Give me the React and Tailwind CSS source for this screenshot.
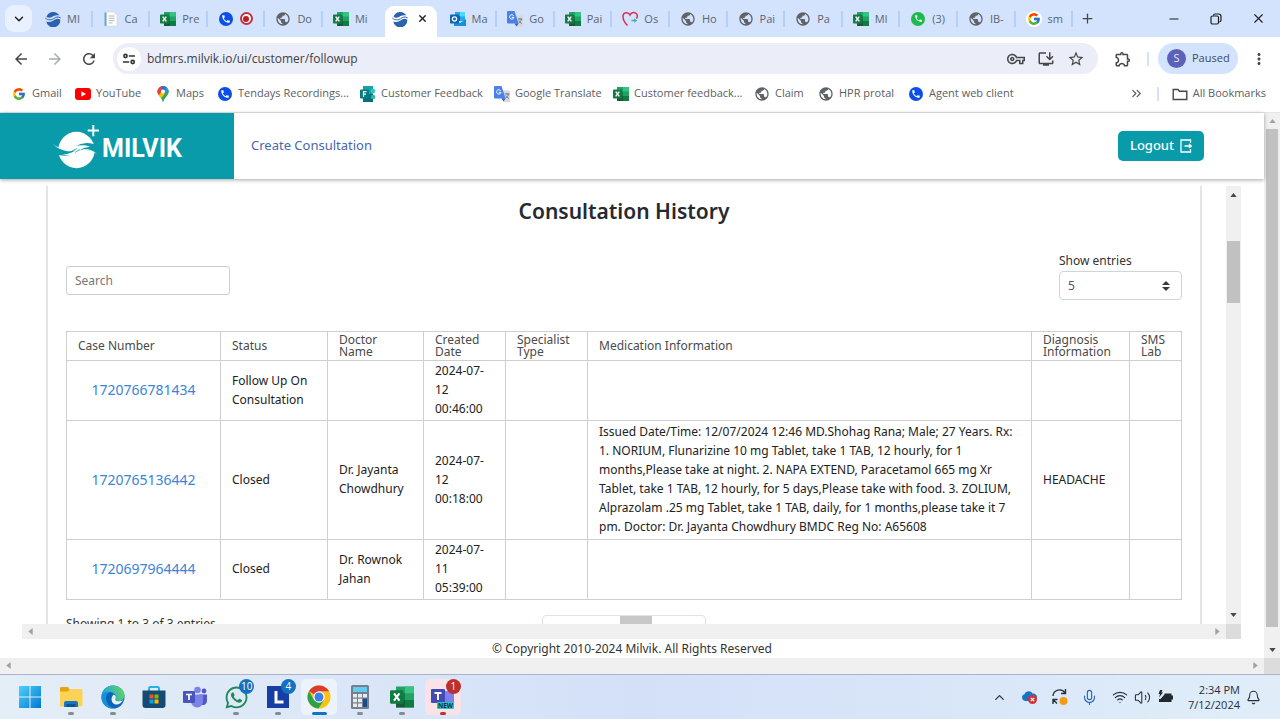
import React from "react";
import { ChevronDown, ChevronUp, Minus, Plus, X, Bell, Mic, Wifi, Volume2, ChevronsRight } from "lucide-react";
import {
  MdArrowBack, MdArrowForward, MdRefresh, MdOutlineVpnKey, MdOutlineInstallDesktop, MdStarBorder,
  MdOutlineExtension, MdMoreVert, MdPublic, MdPhone,
} from "react-icons/md";
import { FcGoogle } from "react-icons/fc";
import { FaWhatsapp } from "react-icons/fa";

const uiFont = "font-['Open_Sans','Noto_Sans',sans-serif]";
const pageFont = "font-['Noto_Sans','Open_Sans',sans-serif]";

/* ---------- favicons ---------- */

const Milvik = () => (
  <svg viewBox="0 0 16 16" className="size-4">
    <path fill="#2b62ad" d="M1.500 5.800A7 7 0 0 1 14.300 4.500C11 3.600 9 4.600 7 6 5 7.200 3 7 1.500 5.800Z" />
    <path fill="#2b62ad" d="M1.300 10.400C4 11.300 6.500 11 8.500 9.500 10.500 8 12.500 7 15.200 8.400A7 7 0 0 1 1.300 10.400Z" />
    <path fill="none" stroke="#2b62ad" strokeWidth="1" d="M.3 7C3.500 9.800 6.500 9 8.500 7.700 11 5.700 13 5.600 15.600 6.800" />
  </svg>
);
const Globe = () => <MdPublic className="size-4 text-[#5f6368]" />;
const Doc = () => (
  <svg viewBox="0 0 16 16" className="size-4">
    <path fill="#fff" stroke="#d0d4d8" strokeWidth=".6" d="M3 1h8.500L14 3.500V15H3Z" />
    <path fill="#6ba7c8" d="M1.500 1.500h2V15h-2Z" />
    <path stroke="#9aa7a4" strokeWidth=".8" d="M5.500 5h6M5.500 7.300h6M5.500 9.600h6M5.500 11.900h4" />
    <path fill="#d6dfdd" d="M11.500 1v2.500H14Z" />
  </svg>
);
const Excel = ({ className = "size-4" }) => (
  <svg viewBox="0 0 16 16" className={className}>
    <path fill="#21a366" d="M4 1h12v14H4Z" />
    <path fill="#33c481" d="M10 1h6v4.500h-6Z" />
    <path fill="#107c41" d="M4 5.500h6V10H4ZM10 10h6v5h-6Z" />
    <path fill="#185c37" d="M4 10h6v5H4Z" />
    <rect y="3.500" width="9" height="9" rx=".8" fill="#107c41" />
    <path stroke="#fff" strokeWidth="1.400" d="m2.700 5.600 3.600 4.800M6.300 5.600l-3.600 4.800" />
  </svg>
);
const Phone = () => (
  <span className="flex size-[14px] items-center justify-center rounded-full bg-[#0b4fe6]">
    <MdPhone className="size-[10px] text-white" />
  </span>
);
const Outlook = () => (
  <svg viewBox="0 0 16 16" className="size-4">
    <path fill="#28a8ea" d="M5 1h10v9H5Z" />
    <path fill="#50d9ff" d="M10 1h5v4.500h-5Z" />
    <path fill="#0364b8" d="M5 5h5v5H5Z" />
    <path fill="#1490df" d="M4 15V9l6 3 6-4v7Z" />
    <rect y="3.500" width="9" height="9" rx=".8" fill="#0f66b8" />
    <circle cx="4.500" cy="8" r="2.100" fill="none" stroke="#fff" strokeWidth="1.300" />
  </svg>
);
const Translate = () => (
  <svg viewBox="0 0 16 16" className="size-4">
    <path fill="#d5d8dc" d="M7 4.500h8a1 1 0 0 1 1 1V15a1 1 0 0 1-1 1h-5Z" />
    <path fill="#4a80e8" d="M1 0h6.500l4 12.500H1a1 1 0 0 1-1-1V1a1 1 0 0 1 1-1Z" />
    <path fill="#2a56c6" d="M7.500 12.500h4L9.500 15.500Z" />
    <path fill="none" stroke="#fff" strokeWidth="1" d="M6.600 4.600A2.200 2.200 0 1 0 7 6.300H4.800" />
    <path stroke="#697078" strokeWidth=".9" fill="none" d="M10.800 8h4.500M13 7v1M14.500 8c-.3 2-1.800 3.500-3 4.200M11.800 9.500c.5 1.200 1.800 2.400 3 3" />
  </svg>
);
const Heart = () => (
  <svg viewBox="0 0 16 16" className="size-4" fill="none">
    <path stroke="#d9304f" strokeWidth="1.500" d="M5.500 14.500C3 12 .8 8.500 1 5 1.300 1.500 6 .2 8 4c1.500-3.500 6-3.300 7-.5.5 1.700.2 3-.5 4" />
    <path fill="#35b5b0" d="M9.500 8.800h2.700V7.300l3 2.200-3 2.200v-1.500H9.500Z" />
  </svg>
);
const Whats = () => (
  <span className="flex size-[14px] items-center justify-center rounded-full bg-[#1cba4a]">
    <MdPhone className="size-[9px] text-white" />
  </span>
);
const Google = () => (
  <span className="flex size-4 items-center justify-center rounded-full bg-white"><FcGoogle className="size-[14px]" /></span>
);
const YouTube = () => (
  <svg viewBox="0 0 16 12" className="h-3 w-4"><rect width="16" height="12" rx="3" fill="#f00" /><path fill="#fff" d="M6.300 3.300v5.400L11 6Z" /></svg>
);
const MapsPin = () => (
  <svg viewBox="0 0 12 16" className="h-4 w-3">
    <clipPath id="pin"><path d="M6 0a5.600 5.600 0 0 1 5.600 5.600C11.600 9.600 8 10.500 6 16 4.400 10.700.4 9.600.4 5.600A5.600 5.600 0 0 1 6 0Z" /></clipPath>
    <g clipPath="url(#pin)">
      <path fill="#34a853" d="M0 0h12v16H0Z" />
      <path fill="#fbbc04" d="M0 11 8.500 1 12 4 4 15Z" />
      <path fill="#4285f4" d="M5 5 9 0l4 4-5 4Z" />
      <path fill="#1a73e8" d="M3 0h8L6 5.500Z" />
      <path fill="#ea4335" d="M0 0h4l2 4-4.500 5L0 7Z" />
      <path fill="#34a853" d="M12 3 3 13.500 6 17 13 8Z" />
    </g>
    <circle cx="6" cy="5.600" r="2" fill="#fff" />
  </svg>
);
const Forms = () => (
  <svg viewBox="0 0 16 16" className="size-4">
    <path fill="#14a3a8" d="M3 0h10v16H3Z" /><path fill="#0a6e78" d="M3 8h10v8H3Z" />
    <circle cx="13" cy="5" r="2.300" fill="#36c9c6" /><circle cx="13" cy="11" r="2.300" fill="#2bb5b5" />
    <rect y="3.500" width="9" height="9" rx=".8" fill="#037b83" />
    <path stroke="#fff" strokeWidth="1.200" fill="none" d="M3.500 10.800V5.600h3M3.500 8.100h2.600" />
  </svg>
);

/* ---------- browser chrome ---------- */

const tabsBefore = [
  ["MI", Milvik], ["Ca", Doc], ["Pre", Excel], [null, Phone], ["Do", Globe], ["Mi", Excel],
];
const tabsAfter = [
  ["Ma", Outlook], ["Go", Translate], ["Pai", Excel], ["Os", Heart], ["Ho", Globe], ["Pai", Globe],
  ["Pa", Globe], ["MI", Excel], ["(3)", Whats], ["IB-", Globe], ["sm", Google],
];

function Tab({ label, Icon, last }) {
  return (
    <button className={`flex h-4 min-w-0 flex-1 items-center gap-1.5 pl-[10px] ${last ? "" : "border-r-2 border-[#b4cffb]"}`}>
      <span className="flex w-4 shrink-0 justify-center"><Icon /></span>
      {label ? (
        <span className="whitespace-nowrap text-left text-[11px] leading-4 text-[#5b6570]">{label}</span>
      ) : (
        <span className="flex size-[13px] items-center justify-center rounded-full border-2 border-[#c5303a] bg-white">
          <span className="size-[6px] rounded-full bg-[#b3202b]" />
        </span>
      )}
    </button>
  );
}

function TabStrip() {
  return (
    <div className="flex h-[37px] shrink-0 items-center bg-[#d3e3fd] pl-[5px]">
      <button aria-label="Search tabs" className="mr-[3px] flex size-[27px] items-center justify-center rounded-[9px] bg-[#e9f1fe]">
        <ChevronDown className="size-[14px] text-[#1f1f1f]" strokeWidth={2.500} />
      </button>
      <div className="flex h-full w-[1038px] items-center">
        {tabsBefore.map(([l, I], i) => <Tab key={i} label={l} Icon={I} last={i === 5} />)}
        <div className="ml-[6px] mr-[3px] flex w-[52px] self-stretch pt-[6px]">
          <div className="flex w-full items-center justify-between rounded-t-[9px] bg-white pb-1.5 pl-[7px] pr-[9px]">
            <Milvik />
            <button aria-label="Close tab"><X className="size-[11px] text-[#1f1f1f]" strokeWidth={3} /></button>
          </div>
        </div>
        {tabsAfter.map(([l, I], i) => <Tab key={i} label={l} Icon={I} />)}
      </div>
      <button aria-label="New tab" className="ml-[7px]"><Plus className="size-[15px] text-[#444746]" /></button>
      <div className="ml-auto flex items-center gap-[28px] pr-[14px] text-[#1f1f1f]">
        <button aria-label="Minimize"><Minus className="size-[14px]" strokeWidth={1.800} /></button>
        <button aria-label="Restore">
          <svg viewBox="0 0 14 14" className="size-[14px]" fill="none" stroke="currentColor" strokeWidth="1.200">
            <rect x="2" y="4" width="7.500" height="8" rx="1.500" /><path d="M4.500 3.500C4.500 2.500 5 2 6 2h3.500C11 2 12 3 12 4.500V8c0 1.200-.5 1.800-1.700 2" />
          </svg>
        </button>
        <button aria-label="Close"><X className="size-[15px]" strokeWidth={1.800} /></button>
      </div>
    </div>
  );
}

function Toolbar() {
  return (
    <div className="flex h-[43px] shrink-0 items-center bg-white px-[12px] text-[#474747]">
      <div className="flex items-center gap-4">
        <button aria-label="Back"><MdArrowBack className="size-[18px]" /></button>
        <button aria-label="Forward"><MdArrowForward className="size-[18px] text-[#a9abae]" /></button>
        <button aria-label="Reload"><MdRefresh className="size-[18px]" /></button>
      </div>
      <div className="ml-[15px] flex h-[31px] flex-1 items-center rounded-full bg-[#ebedf8] pl-1 pr-[13px]">
        <button aria-label="Site information" className="flex size-[24px] items-center justify-center rounded-full bg-white">
          <svg viewBox="0 0 14 14" className="size-[14px]" fill="none" stroke="#333" strokeWidth="1.600">
            <circle cx="3.500" cy="4" r="1.600" /><path d="M6.800 4H13M1 10h6.200" /><circle cx="10.700" cy="10" r="1.600" />
          </svg>
        </button>
        <input aria-label="Address" defaultValue="bdmrs.milvik.io/ui/customer/followup" className="ml-[6px] min-w-0 flex-1 bg-transparent text-[12px] text-[#3f4145] outline-none" />
        <div className="flex items-center gap-[12px]">
          <MdOutlineVpnKey className="size-[18px]" />
          <MdOutlineInstallDesktop className="size-[18px]" />
          <MdStarBorder className="size-[18px]" />
        </div>
      </div>
      <button aria-label="Extensions" className="ml-[16px]"><MdOutlineExtension className="size-[18px]" /></button>
      <span className="ml-[15px] mr-[9px] h-[14px] w-[2px] bg-[#d3e3fd]" />
      <button className="flex h-[31px] w-[80px] items-center gap-[6px] rounded-full bg-[#d3e3fd] pl-[9px] text-[11px] text-[#3c4a60]">
        <span className="flex size-[19px] items-center justify-center rounded-full bg-[#5c62b8] text-[11px] text-[#e8e8ff]">S</span>
        Paused
      </button>
      <button aria-label="Menu" className="ml-[12px]"><MdMoreVert className="size-[18px]" /></button>
    </div>
  );
}

const bookmarks = [
  ["Gmail", Google, "w-[64px]"], ["YouTube", YouTube, "w-[80px]"], ["Maps", MapsPin, "w-[62px]"],
  ["Tendays Recordings...", Phone, "w-[143px]"], ["Customer Feedback", Forms, "w-[134px]"],
  ["Google Translate", Translate, "w-[119px]"], ["Customer feedback...", Excel, "w-[141px]"],
  ["Claim", Globe, "w-[64px]"], ["HPR protal", Globe, "w-[90px]"], ["Agent web client", Phone, "w-[120px]"],
];

function Bookmarks() {
  return (
    <nav className="flex h-[33px] shrink-0 items-center border-b border-[#e6e6e8] bg-white pb-[5px] pl-[11px] pr-[14px] text-[11px] text-[#5b5e63]">
      {bookmarks.map(([t, I, w]) => (
        <a key={t} href="#" className={`flex shrink-0 items-center gap-[5px] whitespace-nowrap ${w}`}>
          <span className="flex w-4 shrink-0 justify-center"><I /></span>{t}
        </a>
      ))}
      <button aria-label="More bookmarks" className="ml-auto"><ChevronsRight className="size-[15px]" /></button>
      <span className="mx-[13px] h-[14px] w-[2px] bg-[#d3e3fd]" />
      <a href="#" className="flex items-center gap-[5px] whitespace-nowrap">
        <svg viewBox="0 0 16 14" className="h-[14px] w-4" fill="none" stroke="#474747" strokeWidth="1.400"><path d="M1.200 11.500v-9H6l1.500 1.800h7.300v8.200H1.200Z" /></svg>
        All Bookmarks
      </a>
    </nav>
  );
}

/* ---------- scroll bars ---------- */

const Arrow = ({ dir, dim }) => {
  const d = { up: "M0 5 4 0l4 5Z", down: "M0 0h8L4 5Z", left: "M5 0v8L0 4Z", right: "M0 0v8l5-4Z" }[dir];
  const vertical = dir === "up" || dir === "down";
  return (
    <svg viewBox={vertical ? "0 0 8 5" : "0 0 5 8"} className={vertical ? "h-[4px] w-[7px]" : "h-[7px] w-[5px]"}>
      <path d={d} fill={dim ? "#a0a0a0" : "#484848"} />
    </svg>
  );
};

const HBar = () => (
  <div className="flex h-[15px] min-w-0 flex-1 items-center justify-between bg-[#f0f0f0] px-[6px]">
    <Arrow dir="left" dim /><Arrow dir="right" dim />
  </div>
);

/* ---------- page ---------- */

function Logo() {
  return (
    <div className="flex w-[234px] shrink-0 items-center self-stretch bg-[#099baa] pl-[52px] text-white">
      <svg viewBox="0 0 48 46" className="h-[46px] w-[48px] shrink-0">
        <circle cx="24.500" cy="27" r="18.200" fill="#fff" />
        <path fill="none" stroke="#099baa" strokeWidth="7" d="M3 27c8 3.500 15 2.500 21-.3 7-4 15-4.500 23.500 1" />
        <path fill="#fff" d="M.7 20.500C6 25.500 12 26 18 24.500c6-2 13-3.200 20-.8l-6 1.300c-3 1-5 3-8 4.300-2 .7-3 .3-2-.5l3-2c-6 2.500-16 2.500-24.300-6.300Z" />
        <path fill="#fff" d="M46.500 32.500c-5-5-10-5.800-15-4.300-6 2.500-12 5.500-21.500 3.300 5 0 9-1.300 12-3.200 3-2 5-3 7-3.300-1 1.500-2 2.200-3 2.800 7-2.500 14-2.500 20.500 4.700Z" />
        <path fill="none" stroke="#099baa" strokeWidth=".7" d="m20 28 5-2.500M23 29.500l5-3.200" />
        <path fill="#fff" d="M40.300 2h2v4.600h4.600v2h-4.600v4.600h-2V8.600h-4.600v-2h4.600Z" />
      </svg>
      <span className="pl-[2px] pt-[6px] font-['Roboto','Liberation_Sans',sans-serif] text-[25px] font-bold leading-[28px]">MILVIK</span>
    </div>
  );
}

const columns = [
  ["Case Number", "w-[154px]"], ["Status", "w-[107px]"], ["Doctor Name", "w-[96px]"], ["Created Date", "w-[82px]"],
  ["Specialist Type", "w-[82px]"], ["Medication Information", ""], ["Diagnosis Information", "w-[98px]"], ["SMS Lab", "w-[52px]"],
];
const rows = [
  ["1720766781434", "Follow Up On Consultation", "", "2024-07-12 00:46:00", "", "", "", ""],
  ["1720765136442", "Closed", "Dr. Jayanta Chowdhury", "2024-07-12 00:18:00", "",
    "Issued Date/Time: 12/07/2024 12:46 MD.Shohag Rana; Male; 27 Years. Rx: 1. NORIUM, Flunarizine 10 mg Tablet, take 1 TAB, 12 hourly, for 1 months,Please take at night. 2. NAPA EXTEND, Paracetamol 665 mg Xr Tablet, take 1 TAB, 12 hourly, for 5 days,Please take with food. 3. ZOLIUM, Alprazolam .25 mg Tablet, take 1 TAB, daily, for 1 months,please take it 7 pm. Doctor: Dr. Jayanta Chowdhury BMDC Reg No: A65608",
    "HEADACHE", ""],
  ["1720697964444", "Closed", "Dr. Rownok Jahan", "2024-07-11 05:39:00", "", "", "", ""],
];

function HistoryTable() {
  return (
    <table className="mt-[31px] w-full table-fixed border-collapse text-[12px] text-[#222]">
      <thead>
        <tr className="h-[29px]">
          {columns.map(([c, w]) => (
            <th key={c} className={`border border-[#cfcfcf] py-0 pl-[11px] pr-4 text-left font-normal leading-3 text-[#4a4a4a] ${w}`}>{c}</th>
          ))}
        </tr>
      </thead>
      <tbody>
        {rows.map((r, i) => (
          <tr key={r[0]} className={i === 1 ? "h-[119px]" : "h-[60px]"}>
            {r.map((c, j) => (
              <td key={j} className={`border border-[#cfcfcf] pb-[2px] pt-0 leading-[19px] ${j === 0 ? "text-center text-[14px]" : "pl-[11px] pr-[11px]"}`}>
                {j === 0 ? <a href="#" className="text-[#3c84d8]">{c}</a> : c}
              </td>
            ))}
          </tr>
        ))}
      </tbody>
    </table>
  );
}

function HistoryCard() {
  return (
    <section className="mx-[24px] min-w-0 flex-1 overflow-hidden border-x-2 border-[#e4e4e7] px-[18px]">
      <h1 className="pt-[9px] text-center text-[21px] font-semibold leading-8 text-[#262a30]">Consultation History</h1>
      <div className="mt-[25px] flex items-end justify-between text-[12px]">
        <input aria-label="Search" placeholder="Search" className="mb-[5px] h-[29px] w-[164px] rounded-[3px] border border-[#cfcfd2] px-2 outline-none placeholder:text-[#777]" />
        <div className="w-[123px]">
          <label htmlFor="entries" className="block leading-[18px] text-[#333]">Show entries</label>
          <div className="mt-px grid items-center">
            <select id="entries" className="col-start-1 row-start-1 h-[29px] w-full appearance-none rounded-[4px] border border-[#ced4da] bg-white px-2 text-[#555]">
              <option>5</option>
            </select>
            <svg viewBox="0 0 8 10" className="pointer-events-none col-start-1 row-start-1 mr-3 h-[10px] w-2 justify-self-end"><path fill="#343a40" d="M0 4 4 0l4 4ZM0 6h8l-4 4Z" /></svg>
          </div>
        </div>
      </div>
      <HistoryTable />
      <div className="flex items-start pt-[15px] text-[12px] leading-[18px] text-[#333]">
        <p className="w-[476px]">Showing 1 to 3 of 3 entries</p>
        <div className="flex h-[29px] w-[164px] items-stretch rounded border border-[#dee2e6]">
          <button aria-label="Previous page" className="w-[77px]" />
          <button aria-label="Page 1" className="w-[32px] bg-[#c8c8c8]" />
          <button aria-label="Next page" className="flex-1" />
        </div>
      </div>
    </section>
  );
}

function Page() {
  return (
    <div className={`flex min-h-0 flex-1 bg-white ${pageFont}`}>
      <div className="flex min-w-0 flex-1 flex-col">
        <header className="z-10 flex h-[66px] shrink-0 items-center bg-white shadow-[0_1px_4px_rgba(0,0,0,0.35)]">
          <Logo />
          <a href="#" className="ml-[17px] text-[13px] text-[#4a66ab]">Create Consultation</a>
          <button className="ml-auto mr-[60px] flex h-[30px] w-[86px] items-center justify-center gap-[6px] rounded-[5px] bg-[#099baa] text-[13px] font-medium text-white">
            Logout
            <svg viewBox="0 0 12 14" className="h-[14px] w-3" fill="none" stroke="currentColor" strokeWidth="1.300"><path d="M10.500 4V1H1v12h9.500v-3M4.500 7H11M9 5l2.200 2L9 9" /></svg>
          </button>
        </header>
        <div className="ml-[22px] mr-[23px] mt-[7px] flex min-h-0 flex-1">
          <div className="flex min-w-0 flex-1 flex-col">
            <div className="flex min-h-0 flex-1 overflow-hidden"><HistoryCard /></div>
            <div className="flex shrink-0"><HBar /></div>
          </div>
          <div className="flex w-[15px] shrink-0 flex-col items-center bg-[#f0f0f0]">
            <div className="flex h-[55px] shrink-0 pt-[7px]"><Arrow dir="up" /></div>
            <div className="h-[62px] w-[13px] shrink-0 bg-[#c1c1c1]" />
            <div className="mt-auto pb-[7px]"><Arrow dir="down" /></div>
            <div className="h-[15px] w-full shrink-0 bg-[#dcdcdc]" />
          </div>
        </div>
        <footer className="shrink-0 text-center text-[12px] leading-[19px] text-[#333]">© Copyright 2010-2024 Milvik. All Rights Reserved</footer>
        <div className="flex h-4 shrink-0 bg-[#f0f0f0]"><HBar /></div>
      </div>
      <div className="flex w-4 shrink-0 flex-col items-center bg-[#f0f0f0]">
        <div className="flex h-[16px] items-center"><Arrow dir="up" dim /></div>
        <div className="w-[12px] flex-1 bg-[#c1c1c1]" />
        <div className="flex h-[31px] items-end pb-[6px]"><Arrow dir="down" /></div>
        <div className="h-4 w-full bg-[#dcdcdc]" />
      </div>
    </div>
  );
}

/* ---------- taskbar ---------- */

const Windows = () => (
  <svg viewBox="0 0 24 24" className="size-6"><defs><linearGradient id="win" x1="0" y1="0" x2="1" y2="1"><stop stopColor="#4fd0fa" /><stop offset="1" stopColor="#0078d4" /></linearGradient></defs>
    <path fill="url(#win)" d="M1 1h10.500v10.500H1ZM12.500 1H23v10.500H12.500ZM1 12.500h10.500V23H1ZM12.500 12.500H23V23H12.500Z" /></svg>
);
const Explorer = () => (
  <svg viewBox="0 0 24 24" className="size-6"><path fill="#e5a50a" d="M1 3a1 1 0 0 1 1-1h7l2 3-2 3H1Z" /><path fill="#fcd354" d="M1 6.500h8L11.500 4H22a1.500 1.500 0 0 1 1.500 1.500V20A1.500 1.500 0 0 1 22 21.500H1Z" /><path fill="#1976c5" d="M5 22v-4a2 2 0 0 1 2-2h10a2 2 0 0 1 2 2v4Z" /><path fill="#0c5595" d="M7.500 19h9v3h-9Z" /></svg>
);
const Edge = () => (
  <svg viewBox="0 0 24 24" className="size-6"><defs><linearGradient id="edge" x1="0" x2="1" y1=".3"><stop stopColor="#1fa5e0" /><stop offset="1" stopColor="#69d955" /></linearGradient></defs>
    <circle cx="12" cy="12" r="11.500" fill="#0b64b8" />
    <path fill="url(#edge)" d="M.5 11.500C1 5 6 .5 12 .5S23.500 5 23.500 10c0 4-3 6-6 6-2 0-4-.8-3-2.500C16 11 13 7 9 7 5 7 1.500 9 .5 11.500Z" />
    <path fill="#1390d8" d="M.5 12C1 8.500 5 6 9 7c-3 1-5 5-3.500 9 1 3.500 4 6.500 8 7C6 24 0 19 .5 12Z" />
    <path fill="#e5f2fc" d="M12.500 9.500c2 1 3 2.500 2 4-1 2 1 2.800 3.500 2.700 2-.1 3.500-.8 4.500-1.800-2 4-5 5.500-8 5-4-.8-5.500-6-2-9.900Z" /></svg>
);
const Store = () => (
  <svg viewBox="0 0 24 24" className="size-6"><path fill="none" stroke="#28b0ea" strokeWidth="2" d="M7 6V3.500A1.500 1.500 0 0 1 8.500 2h7A1.500 1.500 0 0 1 17 3.500V6" /><path fill="#154a74" d="M.5 5.500h23V20a3 3 0 0 1-3 3h-17a3 3 0 0 1-3-3Z" /><path fill="#f25022" d="M7.500 9.500h4v4h-4Z" /><path fill="#7fba00" d="M12.500 9.500h4v4h-4Z" /><path fill="#00a4ef" d="M7.500 14.500h4v4h-4Z" /><path fill="#ffb900" d="M12.500 14.500h4v4h-4Z" /></svg>
);
const Teams = () => (
  <svg viewBox="0 0 24 24" className="size-6"><circle cx="14.500" cy="5" r="3.300" fill="#7b83eb" /><circle cx="21" cy="6" r="2.400" fill="#5059c9" /><path fill="#5059c9" d="M16 9.500h8V16a4 4 0 0 1-6 3.500Z" /><path fill="#7b83eb" d="M8 9.500h12V16a6 6 0 0 1-12 1Z" /><rect y="6" width="12" height="12" rx="1" fill="#4b53bc" /><path stroke="#fff" strokeWidth="1.700" d="M3 9.500h6M6 9.500V15" /></svg>
);
const WhatsApp = () => <FaWhatsapp className="size-[25px] text-[#23875a]" />;
const LApp = () => (
  <svg viewBox="0 0 24 24" className="size-6"><path fill="#173da6" d="M1 1h22v22H1Z" /><path fill="none" stroke="#fff" strokeWidth="3" d="M10 6v11h7.500" /></svg>
);
const Chrome = () => (
  <svg viewBox="0 0 24 24" className="size-6"><circle cx="12" cy="12" r="11.500" fill="#fbc116" /><path fill="#dd3b30" d="M12 12 2 6.300A11.500 11.500 0 0 1 22 6.300H12Z" /><path fill="#2da04e" d="M2 6.300A11.500 11.500 0 0 0 11.500 23.500L17 14.900 12 12 7 14.900Z" /><circle cx="12" cy="12" r="5.700" fill="#fff" /><circle cx="12" cy="12" r="4.500" fill="#3f7fe8" /></svg>
);
const Calc = () => (
  <svg viewBox="0 0 24 24" className="size-6"><rect x="3" width="18" height="24" rx="1.500" fill="#77808a" /><path fill="#60cdf0" d="M5 2h14v5H5Z" /><path fill="#e6ebf0" d="M5 9h4v3.500H5ZM10 9h4v3.500h-4ZM15 9h4v3.500h-4ZM5 13.700h4v3.500H5ZM10 13.700h4v3.500h-4ZM5 18.400h4V22H5ZM10 18.400h4V22h-4Z" /><path fill="#174a91" d="M15 13.700h4V22h-4Z" /></svg>
);
const BigExcel = () => <Excel className="size-6" />;
const TeamsNew = () => (
  <svg viewBox="0 0 24 24" className="size-6"><path fill="#7b83eb" d="M10 6h13v14H10Z" /><rect y="4" width="14" height="14" rx="1" fill="#444ab5" /><path stroke="#fff" strokeWidth="1.900" d="M3.500 8h7M7 8v7" /><rect x="6" y="17" width="17" height="7" rx="1" fill="#24c5d3" /><text x="14.500" y="23" textAnchor="middle" fontSize="6.500" fontWeight="bold" fontFamily="Open Sans" fill="#10333b">NEW</text></svg>
);

const apps = [
  ["Start", Windows], ["File Explorer", Explorer, "dot"], ["Edge", Edge, "dot"], ["Store", Store], ["Teams", Teams],
  ["WhatsApp", WhatsApp, "dot", "10"], ["L", LApp, "dot", "4"], ["Chrome", Chrome, "active"], ["Calculator", Calc, "dot"],
  ["Excel", BigExcel, "dot"], ["Teams new", TeamsNew, "alert", "1"],
];

function Taskbar() {
  return (
    <div className={`flex h-[45px] shrink-0 items-center border-t border-[#a9b3cb] bg-linear-to-r from-[#e4eef7] via-[#d3e0f8] to-[#e0edf9] pl-[12px] ${uiFont}`}>
      <div className="flex w-[449px] justify-between">
        {apps.map(([name, Icon, state, badge]) => (
          <button key={name} aria-label={name} className={`relative flex h-[36px] w-9 flex-col items-center justify-between rounded-[5px] pt-[6px] ${state === "active" ? "bg-[#edf3fc]" : state === "alert" ? "bg-[#f9e3e6]" : ""}`}>
            <Icon />
            {state && <span className={`h-[3px] rounded-full ${state === "active" ? "w-[15px] bg-[#1272c8]" : state === "alert" ? "w-[6px] bg-[#c3312f]" : "w-[6px] bg-[#858b93]"}`} />}
            {badge && <span className={`absolute right-0 top-0 flex h-[15px] min-w-[15px] items-center justify-center rounded-full px-[2px] text-[10px] text-white ${state === "alert" ? "bg-[#bc2f2c]" : "bg-[#1272c0]"}`}>{badge}</span>}
          </button>
        ))}
      </div>
      <div className="ml-auto flex items-center pr-[19px] text-[#26303c]">
        <ChevronUp className="size-[15px]" />
        <svg viewBox="0 0 18 16" className="ml-[14px] h-4 w-[18px]"><path fill="#1376c9" d="M4 12a3.500 3.500 0 0 1-.5-6.800C5 1.500 10 1.500 11.500 4.500c3 0 5 2 4.500 5L12 12Z" /><circle cx="11.500" cy="10.500" r="4.500" fill="#d13438" /><path stroke="#fff" strokeWidth="1.200" d="m9.800 8.800 3.400 3.400m0-3.400-3.400 3.400" /></svg>
        <svg viewBox="0 0 18 18" className="ml-[12px] size-[18px]" fill="none" stroke="currentColor" strokeWidth="1.400"><path d="M2 8a6.500 6.500 0 0 1 12-3M14.500 1v4.500H10M2 16v-4.500h4.500M2.500 12 6 15.500" /><circle cx="12.500" cy="13" r="4" fill="#f49a13" stroke="none" /></svg>
        <Mic className="ml-[12px] size-[17px] text-[#2c65bd]" strokeWidth={1.600} />
        <Wifi className="ml-[14px] size-[16px]" strokeWidth={1.800} />
        <Volume2 className="ml-[6px] size-[17px]" strokeWidth={1.500} />
        <svg viewBox="0 0 17 14" className="ml-[6px] h-[14px] w-[17px]"><path fill="#202830" d="M7.500 3.500h7v2H16v4h-1.500V12H2V9h1.500L7.500 4.500ZM3 0h2.500L4.500 2.500H6L2 7.500 3 4H1.500Z" /></svg>
        <div className="ml-[14px] text-right text-[11px] leading-[15px]"><div>2:34 PM</div><div>7/12/2024</div></div>
        <Bell className="ml-[6px] size-[15px]" strokeWidth={1.700} />
      </div>
    </div>
  );
}

export default function App() {
  return (
    <div className={`flex h-screen flex-col overflow-hidden bg-white ${uiFont}`}>
      <TabStrip />
      <Toolbar />
      <Bookmarks />
      <Page />
      <Taskbar />
    </div>
  );
}
